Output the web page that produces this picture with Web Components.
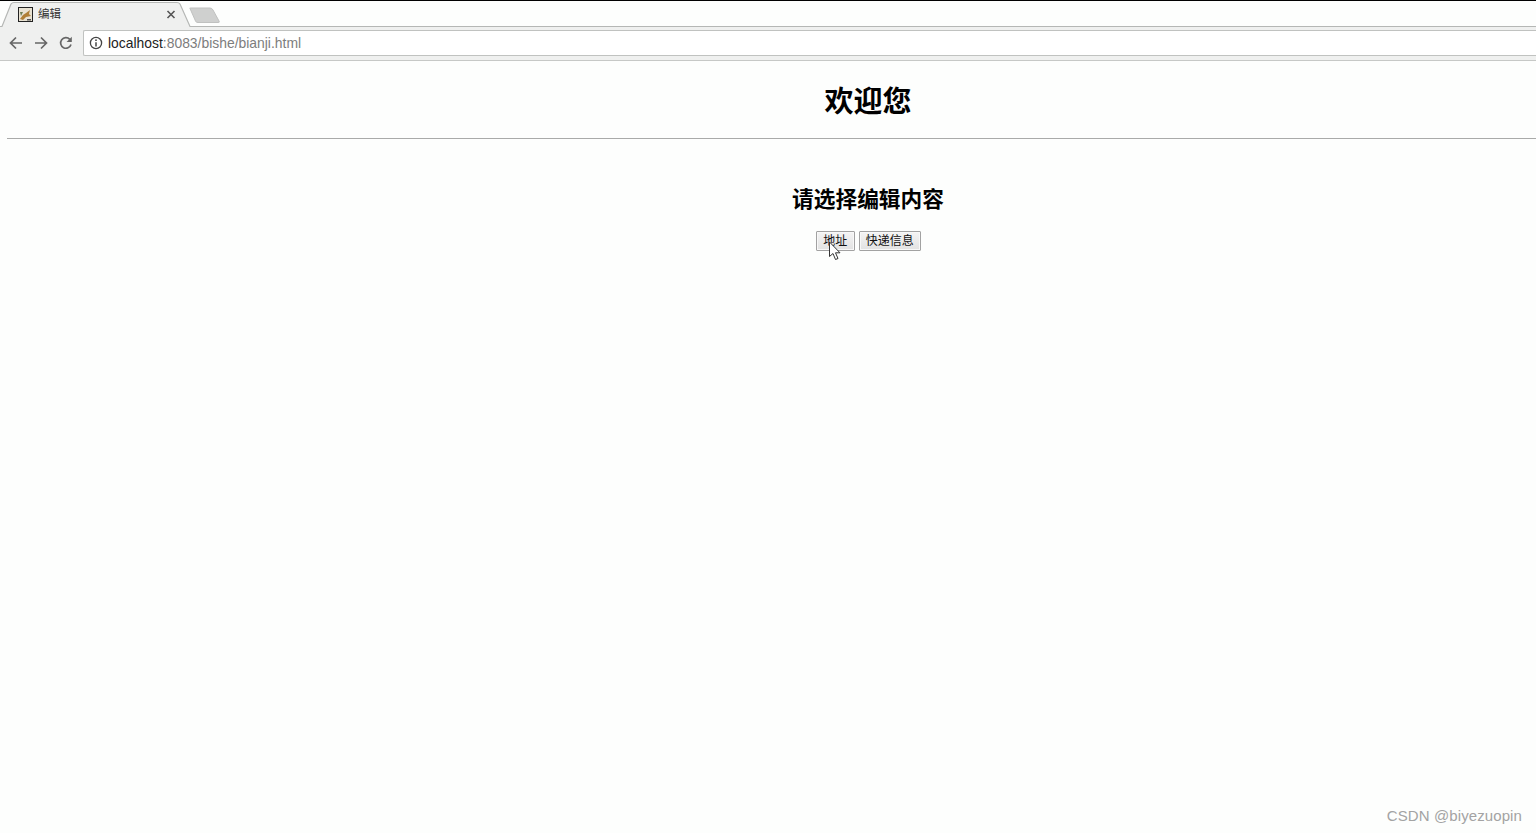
<!DOCTYPE html>
<html lang="zh"><head><meta charset="utf-8"><title>编辑</title>
<style>
html,body{margin:0;height:833px;overflow:hidden;background:#fdfefd}
body{display:flex;flex-direction:column;font-family:"Liberation Sans","Noto Sans CJK SC",sans-serif}
</style></head><body>
<browser-chrome url-host="localhost" url-rest=":8083/bishe/bianji.html" tab-title="编辑"></browser-chrome>
<page-view>
  <h1 slot="title">欢迎您</h1>
  <h2 slot="sub">请选择编辑内容</h2>
  <ui-button slot="actions">地址</ui-button>
  <ui-button slot="actions">快递信息</ui-button>
</page-view>
<script>
class BrowserChrome extends HTMLElement{
  constructor(){super();const s=this.attachShadow({mode:'open'});
  s.innerHTML=`<style>
  :host{display:block;flex:none;height:61px;position:relative;background:#fdfefd;border-top:1px solid #000;box-sizing:border-box;font-family:"Liberation Sans","Noto Sans CJK SC",sans-serif}
  .strip{height:25px;box-sizing:border-box;position:relative;z-index:1}
  .tabshape{position:absolute;left:0;top:0}
  .tab{position:absolute;left:18px;top:6px;display:flex;align-items:center;height:15px;width:168px}
  .title{font-size:11.5px;color:#333;margin-left:5px;flex:1;line-height:15px}
  .x{position:absolute;left:148px;top:0;width:10px;height:15px}
  .bar{height:35px;display:flex;align-items:center;background:#eff0ef;box-sizing:border-box;border-bottom:1px solid #c6c8c6;padding:0 0 1px 8px}
  .nav{display:flex;gap:9px;align-items:center;flex:none;width:75px}
  .url{flex:1;height:26px;background:#fff;border:1px solid #c0c2c0;border-right:0;border-radius:2px 0 0 2px;display:flex;align-items:center;box-sizing:border-box;padding-left:5px;font-size:13.9px;color:#7d7d7d;white-space:nowrap}
  .url b{font-weight:400;color:#222}
  .url svg{margin-right:5px}
  </style>
  <div class="strip">
    <svg class="tabshape" width="1536" height="31" viewBox="0 0 1536 31">
      <path d="M0 25.5 H2 L11 3 Q12 1.5 14 1.5 H177 Q179 1.5 180 3 L190 25.5 V27 H0Z" fill="#eff0ef"/>
      <path d="M0 25.5 H2 L11 3 Q12 1.5 14 1.5 H177 Q179 1.5 180 3 L190 25.5 H1536" fill="none" stroke="#b5b7b5" stroke-width="1.2"/>
      <path d="M190 7.5 Q189 7 191 7 H210 Q212 7 213 9 L219 20 Q220 21.5 218 21.5 H198 Q196 21.5 195.5 20 Z" fill="#cfd0cf" stroke="#c0c1c0" stroke-width="1"/>
    </svg>
    <div class="tab">
      <svg width="15" height="15" viewBox="0 0 15 15"><rect x=".5" y=".5" width="14" height="14" fill="#e8e2d2" stroke="#222"/><path d="M2 12 L5 8 L8 6 L12 3 L11 7 L13 9 L8 10 L5 13Z" fill="#b07f35"/><path d="M2 5 L5 5 L3 9Z" fill="#6d7d50"/><path d="M9 12H13V13.5H9Z" fill="#555"/></svg>
      <span class="title">编辑</span>
      <svg class="x" viewBox="0 0 10 15"><path d="M1.5 4 L8.5 11 M8.5 4 L1.5 11" stroke="#555" stroke-width="1.6"/></svg>
    </div>
  </div>
  <div class="bar">
    <div class="nav">
      <svg width="16" height="16" viewBox="0 0 16 16"><path d="M14 8H2.5M8 2.5 2.5 8 8 13.5" fill="none" stroke="#666" stroke-width="1.7"/></svg>
      <svg width="16" height="16" viewBox="0 0 16 16"><path d="M2 8H13.5M8 2.5 13.5 8 8 13.5" fill="none" stroke="#666" stroke-width="1.7"/></svg>
      <svg width="16" height="16" viewBox="0 0 16 16"><path d="M13 9.5A5.3 5.3 0 1 1 11.8 4.3" fill="none" stroke="#666" stroke-width="1.7"/><path d="M13.8 1.8V7H8.6Z" fill="#666"/></svg>
    </div>
    <div class="url">
      <svg width="14" height="14" viewBox="0 0 14 14"><circle cx="7" cy="7" r="5.6" fill="none" stroke="#444" stroke-width="1.3"/><path d="M7 6.2V10.4" stroke="#444" stroke-width="1.5"/><circle cx="7" cy="4.2" r=".9" fill="#444"/></svg>
      <span><b id="h"></b><span id="r"></span></span>
    </div>
  </div>`;
  s.getElementById('h').textContent=this.getAttribute('url-host');
  s.getElementById('r').textContent=this.getAttribute('url-rest');
  s.querySelector('.title').textContent=this.getAttribute('tab-title');
  }
}
class PageView extends HTMLElement{
  constructor(){super();this.attachShadow({mode:'open'}).innerHTML=`<style>
  :host{display:block;flex:1;position:relative;min-height:0;overflow:hidden;font-family:"Liberation Sans","Noto Sans CJK SC",sans-serif;color:#000}
  .wrap{width:1722px;margin-left:7px;text-align:center}
  .head{height:78px;display:flex;align-items:center;justify-content:center;padding-top:4px;box-sizing:border-box;border-bottom:1px solid #a9aaa9}
  ::slotted(h1){margin:0;font-size:29px;font-weight:700;line-height:40px}
  ::slotted(h2){margin:0;font-size:21.7px;font-weight:700;line-height:30px}
  .sub{margin-top:46px}
  .actions{margin-top:16px;padding-left:1px;display:flex;justify-content:center;gap:4px}
  .wm{position:absolute;right:14px;bottom:8px;font-size:15px;color:#a3a3a3;letter-spacing:.1px;line-height:18px}
  .cursor{position:absolute;left:828px;top:180px}
  </style>
  <div class="wrap">
    <div class="head"><slot name="title"></slot></div>
    <div class="sub"><slot name="sub"></slot></div>
    <div class="actions"><slot name="actions"></slot></div>
  </div>
  <svg class="cursor" width="14" height="20" viewBox="0 0 14 20"><path d="M1.5 1V15.5L5 12.5 7.5 18.5 10 17.5 7.5 11.8H12Z" fill="#fff" stroke="#333" stroke-width="1"/></svg>
  <div class="wm">CSDN @biyezuopin</div>`;}
}
class UiButton extends HTMLElement{
  constructor(){super();this.attachShadow({mode:'open'}).innerHTML=`<style>
  :host{display:block}
  button{display:block;height:20px;padding:0 6.2px;margin:0;border:1px solid #a2a2a2;border-radius:1px;background:linear-gradient(#f4f4f4,#e2e2e2);font:12px "Liberation Sans","Noto Sans CJK SC",sans-serif;color:#111;line-height:18px;box-shadow:inset 0 0 0 1px #f8f8f8}
  </style><button><slot></slot></button>`;}
}
customElements.define('browser-chrome',BrowserChrome);
customElements.define('page-view',PageView);
customElements.define('ui-button',UiButton);
</script>
</body></html>
